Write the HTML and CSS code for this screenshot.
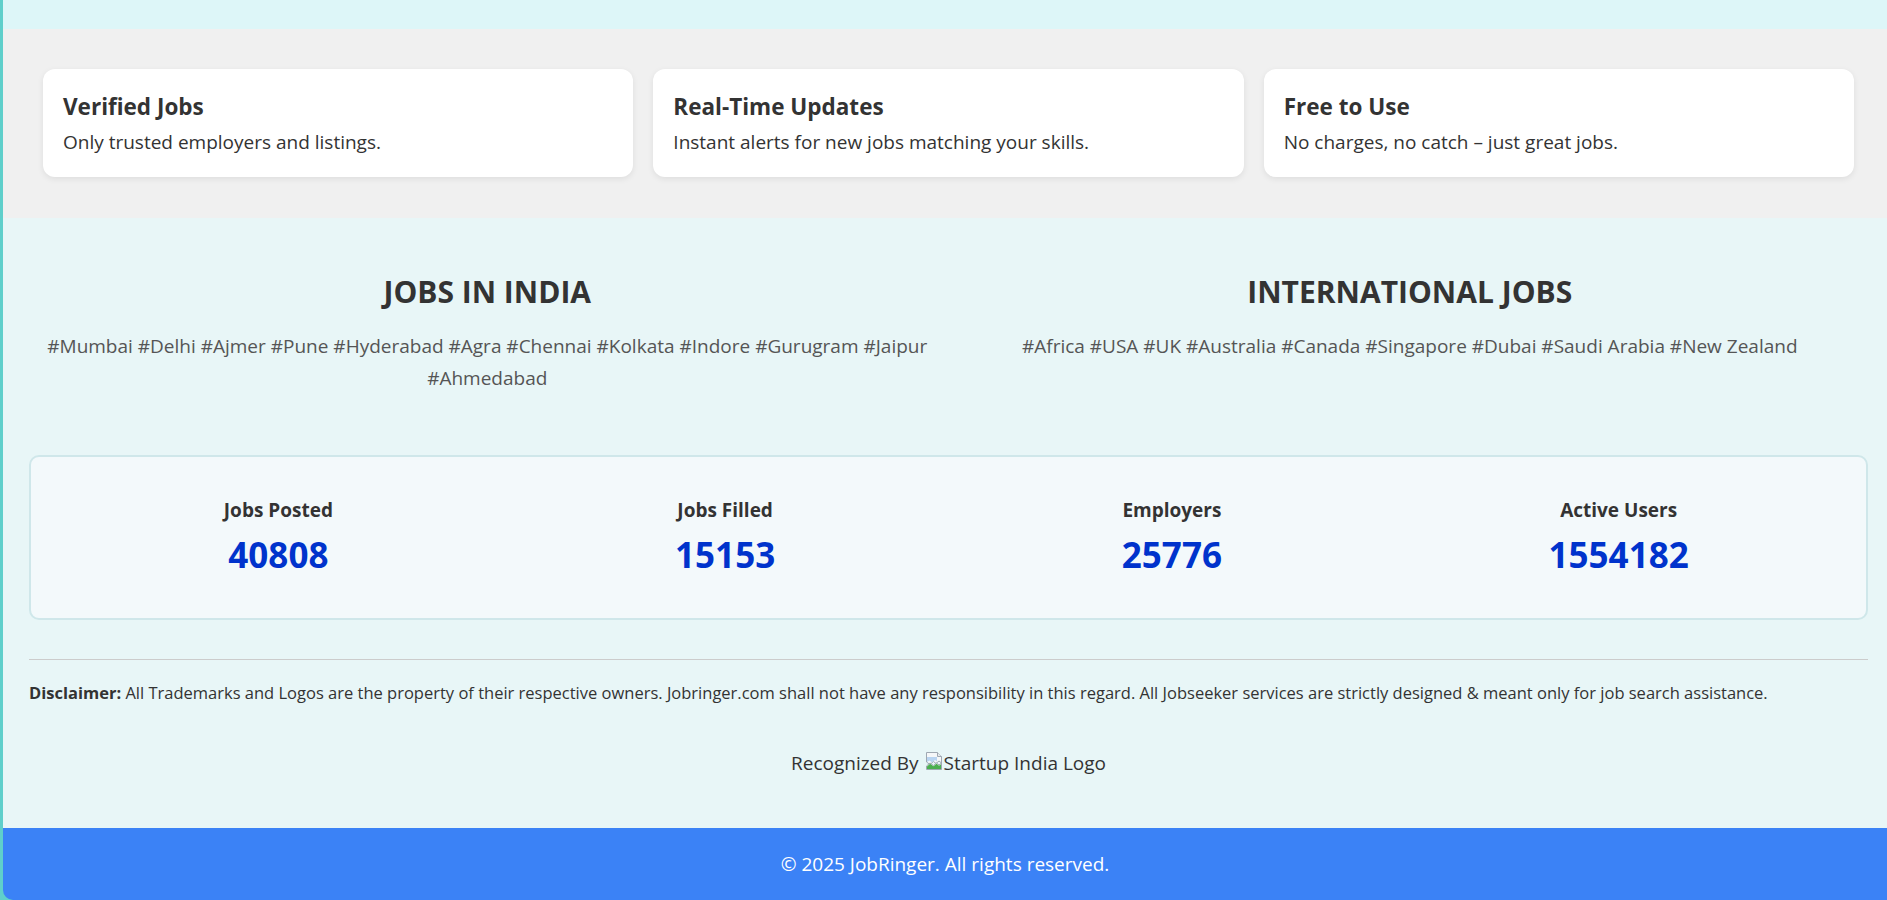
FILE: index.html
```html
<!DOCTYPE html>
<html lang="en">
<head>
<meta charset="utf-8">
<title>JobRinger</title>
<link rel="stylesheet" href="styles.css">
</head>
<body>
<div class="page">
  <div class="top-strip"></div>

  <section class="features">
    <div class="feature-card">
      <h3 class="feature-title">Verified Jobs</h3>
      <p class="feature-text">Only trusted employers and listings.</p>
    </div>
    <div class="feature-card">
      <h3 class="feature-title">Real-Time Updates</h3>
      <p class="feature-text">Instant alerts for new jobs matching your skills.</p>
    </div>
    <div class="feature-card">
      <h3 class="feature-title">Free to Use</h3>
      <p class="feature-text">No charges, no catch – just great jobs.</p>
    </div>
  </section>

  <main class="main">
    <div class="locations">
      <div class="loc-col">
        <h2 class="loc-title">JOBS IN INDIA</h2>
        <p class="loc-tags">#Mumbai #Delhi #Ajmer #Pune #Hyderabad #Agra #Chennai #Kolkata #Indore #Gurugram #Jaipur #Ahmedabad</p>
      </div>
      <div class="loc-col">
        <h2 class="loc-title">INTERNATIONAL JOBS</h2>
        <p class="loc-tags">#Africa #USA #UK #Australia #Canada #Singapore #Dubai #Saudi Arabia #New Zealand</p>
      </div>
    </div>

    <div class="stats">
      <div class="stat">
        <div class="stat-label">Jobs Posted</div>
        <div class="stat-value">40808</div>
      </div>
      <div class="stat">
        <div class="stat-label">Jobs Filled</div>
        <div class="stat-value">15153</div>
      </div>
      <div class="stat">
        <div class="stat-label">Employers</div>
        <div class="stat-value">25776</div>
      </div>
      <div class="stat">
        <div class="stat-label">Active Users</div>
        <div class="stat-value">1554182</div>
      </div>
    </div>

    <hr class="divider">

    <p class="disclaimer"><strong>Disclaimer:</strong> All Trademarks and Logos are the property of their respective owners. Jobringer.com shall not have any responsibility in this regard. All Jobseeker services are strictly designed &amp; meant only for job search assistance.</p>

    <p class="recognized">Recognized By <span class="broken-img"><svg class="broken-icon" width="20" height="20" viewBox="0 0 20 20" aria-hidden="true"><path d="M2.5 1.5h11l4 4v6.5l-2.5-2-3 2.5-2.5-2-3.5 3-3.5-2.5z" fill="#f5f7f9" stroke="#9fa8b2" stroke-width="1"/><path d="M13.5 1.5v4h4" fill="#e6eaee" stroke="#9fa8b2" stroke-width="1"/><path d="M3 6h10v4.5l-2 -1.5-3 2.5-2.5-2L3 11z" fill="#b9d4f1"/><path d="M2.5 18.5v-3.5l3.5-3 3.5 2.5 3-2.5 2.5 2 2.5-2v6.5z" fill="#f5f7f9" stroke="#9fa8b2" stroke-width="1"/><path d="M3 18v-2.6l3.1-2.6 3.4 2.4 3-2.4 2.5 2 2-1.6V18z" fill="#4caf50"/></svg>Startup India Logo</span></p>
  </main>

  <footer class="footer">© 2025 JobRinger. All rights reserved.</footer>
</div>
</body>
</html>
```

FILE: styles.css
```css
* { box-sizing: border-box; }

html, body {
  margin: 0;
  padding: 0;
}

body {
  background: #5fcfcb;
  font-family: "Open Sans", "Noto Sans", sans-serif;
  color: #333;
}

.page {
  margin-left: 3px;
  overflow: hidden;
  border-bottom-left-radius: 10px;
}

.top-strip {
  height: 29px;
  background: #ddf6f8;
}

.features {
  background: #f0f0f0;
  padding: 40px 33px 41px 40px;
  display: grid;
  grid-template-columns: repeat(3, 1fr);
  gap: 20px;
}

.feature-card {
  background: #fff;
  border-radius: 12px;
  box-shadow: 0 2px 6px rgba(0, 0, 0, 0.08);
  padding: 24px 20px 22px;
  height: 108px;
}

.feature-title {
  margin: 0 0 8px;
  font-size: 22.5px;
  line-height: 28px;
  font-weight: 700;
  color: #333;
}

.feature-text {
  margin: 0;
  font-size: 19px;
  line-height: 26px;
  color: #333;
}

.main {
  background: #e8f6f7;
  padding: 56px 19px 52px 26px;
}

.locations {
  display: grid;
  grid-template-columns: 1fr 1fr;
  gap: 6px;
}

.loc-col {
  text-align: center;
  padding: 0 10px;
}

.loc-title {
  margin: 0 0 20px;
  font-size: 30px;
  line-height: 36px;
  font-weight: 700;
  color: #333;
}

.loc-tags {
  margin: 0;
  font-size: 19px;
  line-height: 32px;
  color: #555;
}

.stats {
  margin-top: 61px;
  background: #f3f9fb;
  border: 2px solid #cfe7ea;
  border-radius: 10px;
  padding: 41px 24px;
  display: grid;
  grid-template-columns: repeat(4, 1fr);
  text-align: center;
}

.stat-label {
  font-size: 19px;
  line-height: 24px;
  font-weight: 700;
  color: #333;
  margin-bottom: 11px;
}

.stat-value {
  font-size: 35px;
  line-height: 44px;
  font-weight: 700;
  color: #0033cc;
}

.divider {
  margin: 39px 0 22px;
  border: 0;
  border-top: 1px solid #cccccc;
  height: 0;
}

.disclaimer {
  margin: 0;
  font-size: 16.5px;
  line-height: 22px;
  color: #333;
}

.disclaimer strong { font-weight: 700; }

.recognized {
  margin: 46px 0 0;
  text-align: center;
  font-size: 19px;
  line-height: 26px;
  color: #333;
}

.broken-img {
  display: inline;
}

.broken-icon {
  display: inline-block;
  vertical-align: -1px;
}

.footer {
  background: #3b82f6;
  color: #fff;
  height: 72px;
  display: flex;
  align-items: center;
  justify-content: center;
  font-size: 19px;
}
```
